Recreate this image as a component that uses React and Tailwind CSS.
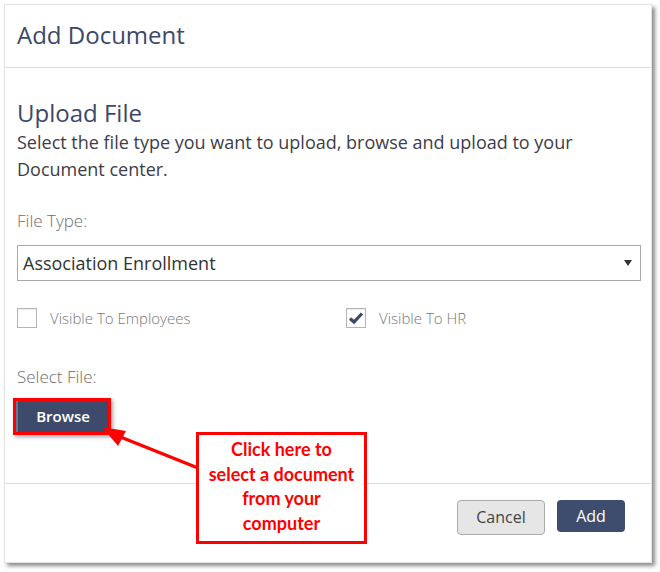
import React from "react";

function Checkbox({ checked }) {
  return (
    <div className="w-[20px] h-[20px] border border-[#b5b5b5] bg-white flex items-center justify-center shadow-[inset_0_1px_1px_rgba(0,0,0,0.08)]">
      {checked && (
        <svg width="16" height="14" viewBox="0 0 16 14">
          <path d="M2 7.5 L6 11 L14 2.5" fill="none" stroke="#3b4868" strokeWidth="3.2" strokeLinejoin="miter" />
        </svg>
      )}
    </div>
  );
}

export default function App() {
  return (
    <div className="relative w-[660px] h-[572px] bg-white" style={{ fontFamily: '"Open Sans", "Noto Sans", sans-serif' }}>
      <div className="ml-[4px] mt-[4px] w-[648px] h-[559px] bg-white border border-[#e4e4e4] shadow-[3px_3px_4px_rgba(0,0,0,0.45)] flex flex-col">
        <div className="h-[63px] border-b border-[#dedede] flex items-center pl-[12px]">
          <h1 className="text-[24px] leading-[32px] text-[#3c4868] mt-[-2px]">Add Document</h1>
        </div>
        <div className="pl-[12px] pr-[10px] pt-[29px] flex flex-col">
          <h2 className="text-[24px] leading-[32px] text-[#3c4868]">Upload File</h2>
          <p className="text-[18px] leading-[27px] text-[#3d3d48]">
            Select the file type you want to upload, browse and upload to your Document center.
          </p>
          <div className="mt-[26px] text-[17px] leading-[24px] text-[#6e6e6e] font-light">File Type:</div>
          <div className="mt-[12px] h-[36px] border border-[#a9a9a9] flex items-center justify-between pl-[5px] pr-[8px]">
            <span className="text-[18px] text-[#333]">Association Enrollment</span>
            <svg width="8" height="6" viewBox="0 0 8 6"><path d="M0 0 L8 0 L4 6 Z" fill="#333" /></svg>
          </div>
          <div className="mt-[26px] flex items-center">
            <div className="w-[329px] flex items-center">
              <Checkbox />
              <span className="ml-[13px] text-[15px] text-[#777] font-light">Visible To Employees</span>
            </div>
            <div className="flex items-center">
              <Checkbox checked />
              <span className="ml-[13px] text-[15px] text-[#777] font-light">Visible To HR</span>
            </div>
          </div>
          <div className="mt-[35px] text-[17px] leading-[24px] text-[#6e6e6e] font-light">Select File:</div>
          <div className="mt-[9px] self-start ml-[-4px] border-[3px] border-[#ff0000] shadow-[2px_2px_4px_rgba(0,0,0,0.35)]">
            <button className="w-[92px] h-[31px] bg-[#3e4a6b] text-white text-[15px] font-semibold border-l-2 border-[#6b7591]">Browse</button>
          </div>
        </div>
        <div className="mt-[48px] border-t border-[#dedede] flex justify-end items-start pr-[26px] pt-[16px] gap-[12px]">
          <button className="w-[88px] h-[35px] bg-[#e6e6e6] border border-[#ababab] rounded-[4px] text-[16px] text-[#444]">Cancel</button>
          <button className="w-[68px] h-[32px] bg-[#3e4c6d] rounded-[4px] text-[16px] text-white">Add</button>
        </div>
      </div>

      <svg className="absolute left-0 top-0" width="660" height="572" viewBox="0 0 660 572">
        <line x1="118" y1="432" x2="198" y2="464" stroke="#ff0000" strokeWidth="3.5" />
        <path d="M102 423 L126 427 L118 442 Z" fill="#ff0000" />
      </svg>

      <div
        className="absolute left-[196px] top-[428px] w-[171px] h-[112px] border-[3px] border-[#ff0000] bg-white flex flex-col items-center justify-start pt-[2px] text-center text-[#ff0000] font-bold text-[18px] leading-[24.7px]"
        style={{ fontFamily: 'Lato, "Open Sans", sans-serif' }}
      >
        <div>Click here to<br />select a document<br />from your<br />computer</div>
      </div>
    </div>
  );
}
